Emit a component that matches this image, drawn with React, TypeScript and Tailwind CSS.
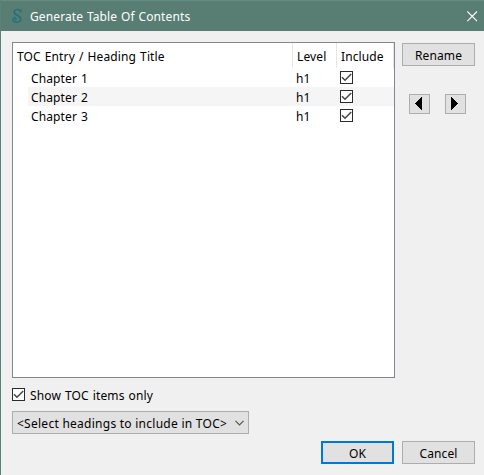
import React from 'react';

const rows = ['Chapter 1', 'Chapter 2', 'Chapter 3'];

function Check() {
  return (
    <svg className="block shrink-0" width="13" height="13" viewBox="0 0 13 13">
      <rect x="0.5" y="0.5" width="12" height="12" fill="#fff" stroke="#2b2b2b" />
      <path d="M2 6.2 L5 9.2 L11.2 3" fill="none" stroke="#444" strokeWidth="1.5" />
    </svg>
  );
}

function Arrow({ d }: { d: string }) {
  return (
    <button className="flex h-5 w-[21px] border border-[#adadad] bg-[#e1e1e1]">
      <svg width="19" height="18" viewBox="0 0 19 18" shapeRendering="crispEdges">
        <path d={d} fill="#000" />
      </svg>
    </button>
  );
}

export default function App() {
  return (
    <div className="flex h-[475px] w-[484px] flex-col overflow-hidden border-l border-[#5a8278] bg-[#f0f0f0] font-['Noto_Sans',sans-serif] text-[12px] leading-[16px] tracking-[0.12px] whitespace-nowrap text-black [word-spacing:0.8px]">
      <header className="flex h-[31px] shrink-0 items-center border-t border-[#648c82] bg-[#587d73] text-white">
        <svg className="ml-[10px]" width="13" height="16" viewBox="0 0 13 16" fill="none" stroke="#24727f">
          <path d="M10 4.8 V1.4" strokeWidth="1.2" />
          <path d="M9.6 3.6 C8.4 0.8 3.4 1 3.2 4 C3 7.6 9.8 7.2 9.8 11 C9.6 14.6 4.4 15.2 2.4 13 C1 11 2.8 9 4.6 10 C5.6 10.8 4.8 12 3.8 11.6" strokeWidth="1.5" />
          <path d="M3.8 5.2 C5 7.4 8.6 7.6 9.4 10.2" strokeWidth="1.5" />
        </svg>
        <span className="ml-[6px] pt-[2px] [word-spacing:0.5px]">Generate Table Of Contents</span>
        <svg className="mr-[6px] ml-auto" width="11" height="11" viewBox="0 0 11 11">
          <path d="M0.3 0.5 L10 10.2 M10 0.5 L0.3 10.2" stroke="#fff" strokeWidth="1.1" />
        </svg>
      </header>
      <main className="flex pt-[11px] pl-[11px]">
        <section className="h-[336px] w-[383px] border border-[#828790] bg-white">
          <div className="flex h-[25px] items-center">
            <div className="w-[280px] self-stretch border-r border-[#e5e5e5] pt-[6px] pl-1">TOC Entry / Heading Title</div>
            <div className="w-[44px] self-stretch border-r border-[#e5e5e5] pt-[6px] pl-1">Level</div>
            <div className="w-[57px] self-stretch border-r border-[#e5e5e5] pt-[6px] pl-1">Include</div>
          </div>
          {rows.map((r, i) => (
            <div key={r} className={'ml-[15px] flex h-[19px] items-center ' + (i === 1 ? 'bg-[#f5f5f5]' : '')}>
              <span className="w-[265px] pt-[2px] pl-[3px]">{r}</span>
              <span className="w-[47px] pt-[2px] pl-[3px]">h1</span>
              <Check />
            </div>
          ))}
        </section>
        <aside className="ml-[7px] pt-px">
          <button className="block h-[23px] w-[73px] border border-[#adadad] bg-[#e1e1e1] pt-[2px]">Rename</button>
          <div className="mt-7 ml-[7px] flex gap-[15px]">
            <Arrow d="M12 2 V15 H11 V14 H10 V13 H9 V12 H8 V11 H7 V10 H6 V9 H5 V8 H6 V7 H7 V6 H8 V5 H9 V4 H10 V3 H11 V2 Z" />
            <Arrow d="M5 2 V15 H6 V14 H7 V13 H8 V12 H9 V11 H10 V10 H11 V9 H12 V8 H11 V7 H10 V6 H9 V5 H8 V4 H7 V3 H6 V2 Z" />
          </div>
        </aside>
      </main>
      <label className="mt-[10px] ml-[11px] flex h-[13px] items-center gap-[5px]">
        <Check />
        <span className="pt-[2px]">Show TOC items only</span>
      </label>
      <button className="mt-[10px] ml-[11px] flex h-[23px] w-[237px] shrink-0 items-center border border-[#adadad] bg-[#e1e1e1] pl-1">
        <span className="pt-[2px] tracking-[0.26px]">&lt;Select headings to include in TOC&gt;</span>
        <svg className="mr-1 ml-auto" width="9" height="6" viewBox="0 0 9 6">
          <path d="M0.5 0.8 L4.5 4.8 L8.5 0.8" fill="none" stroke="#555" strokeWidth="1.2" />
        </svg>
      </button>
      <footer className="mt-[7px] ml-[320px] flex gap-2">
        <button className="h-[23px] w-[73px] border-2 border-[#0078d7] bg-[#e1e1e1] pt-[2px]">OK</button>
        <button className="h-[23px] w-[73px] border border-[#adadad] bg-[#e1e1e1] pt-[2px]">Cancel</button>
      </footer>
    </div>
  );
}
